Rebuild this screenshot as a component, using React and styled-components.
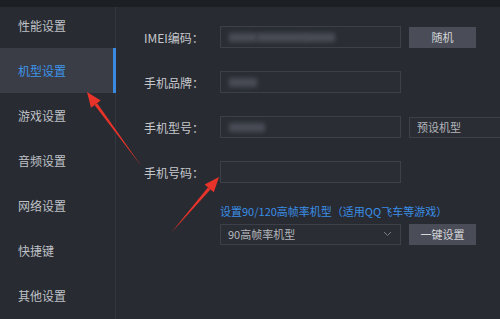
import React from "react";
import styled, { createGlobalStyle } from "styled-components";

const Global = createGlobalStyle`
  html, body { margin: 0; padding: 0; background: #282b32; }
  body { font-family: "Noto Sans CJK SC", "Noto Sans", sans-serif; }
  * { box-sizing: border-box; }
`;

const Page = styled.div`
  position: relative;
  width: 500px;
  height: 319px;
  overflow: hidden;
  background: #282b32;
  display: flex;
  flex-direction: column;
`;

const TopBar = styled.div`
  height: 7px;
  background: #1c1f24;
  flex-shrink: 0;
  position: relative;
  z-index: 2;
`;

const Body = styled.div`
  flex: 1;
  display: flex;
`;

const Sidebar = styled.nav`
  width: 116px;
  flex-shrink: 0;
  border-right: 1px solid #34373f;
  display: flex;
  flex-direction: column;
  margin-top: -4px;
`;

const NavItem = styled.div`
  height: 45px;
  flex-shrink: 0;
  display: flex;
  align-items: center;
  padding-left: 18px;
  font-size: 12px;
  color: ${(p) => (p.$active ? "#3d94ea" : "#bfc1c6")};
  background: ${(p) => (p.$active ? "#3a3d46" : "transparent")};
  border-right: 3px solid ${(p) => (p.$active ? "#3a8ae0" : "transparent")};
  margin-right: -1px;
  position: relative;
  z-index: 1;
`;

const Content = styled.div`
  flex: 1;
  padding: 19px 0 0 28px;
  display: flex;
  flex-direction: column;
`;

const Row = styled.div`
  display: flex;
  align-items: center;
  height: 22px;
  margin-bottom: ${(p) => p.$mb ?? 23}px;
`;

const Label = styled.div`
  width: 76px;
  font-size: 12px;
  color: #c6c8cc;
  white-space: nowrap;
`;

const Input = styled.div`
  width: 181px;
  height: 22px;
  border: 1px solid #3d4049;
  background: #2a2d34;
  position: relative;
  overflow: hidden;
`;

const Blur = styled.div`
  position: absolute;
  left: ${(p) => p.$x}px;
  top: 6px;
  width: ${(p) => p.$w}px;
  height: 9px;
  background: #4c4f58;
  filter: blur(2px);
  opacity: 0.9;
`;

const Button = styled.div`
  margin-left: 8px;
  width: 67px;
  height: 21px;
  background: #4a4d57;
  color: #d4d6da;
  font-size: 11px;
  display: flex;
  align-items: center;
  justify-content: center;
`;

const Select = styled.div`
  margin-left: ${(p) => (p.$ml ? 8 : 0)}px;
  width: ${(p) => p.$w}px;
  height: 21px;
  border: 1px solid #3d4049;
  background: #2a2d34;
  color: #b4b6bb;
  font-size: 11px;
  display: flex;
  align-items: center;
  padding: 0 8px 0 7px;
  justify-content: space-between;
  flex-shrink: 0;
`;

const LinkText = styled.div`
  margin-left: 76px;
  font-size: 11px;
  color: #3a8ee6;
  margin-bottom: 4px;
  white-space: nowrap;
`;

const Arrows = styled.svg`
  position: absolute;
  left: 0;
  top: 0;
  pointer-events: none;
  z-index: 3;
`;

const items = ["性能设置", "机型设置", "游戏设置", "音频设置", "网络设置", "快捷键", "其他设置"];

function Arrow({ x1, y1, x2, y2 }) {
  const ang = Math.atan2(y2 - y1, x2 - x1);
  const L = 15, W = 6;
  const bx = x2 - L * Math.cos(ang), by = y2 - L * Math.sin(ang);
  const px = -Math.sin(ang) * W, py = Math.cos(ang) * W;
  const qx = -Math.sin(ang) * 1.6, qy = Math.cos(ang) * 1.6;
  return (
    <g fill="#e8332a">
      <polygon points={`${x1},${y1} ${bx + qx},${by + qy} ${bx - qx},${by - qy}`} />
      <polygon points={`${x2},${y2} ${bx + px},${by + py} ${bx - px},${by - py}`} />
    </g>
  );
}

export default function App() {
  return (
    <Page>
      <Global />
      <TopBar />
      <Body>
        <Sidebar>
          {items.map((t, i) => (
            <NavItem key={t} $active={i === 1}>{t}</NavItem>
          ))}
        </Sidebar>
        <Content>
          <Row>
            <Label>IMEI编码：</Label>
            <Input>
              <Blur $x={8} $w={28} />
              <Blur $x={36} $w={50} />
              <Blur $x={84} $w={30} />
            </Input>
            <Button>随机</Button>
          </Row>
          <Row>
            <Label>手机品牌：</Label>
            <Input>
              <Blur $x={8} $w={28} />
            </Input>
          </Row>
          <Row>
            <Label>手机型号：</Label>
            <Input>
              <Blur $x={8} $w={36} />
            </Input>
            <Select $ml $w={100}>预设机型<span /></Select>
          </Row>
          <Row $mb={20}>
            <Label>手机号码：</Label>
            <Input />
          </Row>
          <LinkText>设置90/120高帧率机型（适用QQ飞车等游戏）</LinkText>
          <Row>
            <Label />
            <Select $w={181}>
              <span>90高帧率机型</span>
              <svg width="9" height="6" viewBox="0 0 9 6">
                <path d="M1 1l3.5 3.5L8 1" stroke="#7a7d85" strokeWidth="1" fill="none" />
              </svg>
            </Select>
            <Button>一键设置</Button>
          </Row>
        </Content>
      </Body>
      <Arrows width="500" height="319">
        <Arrow x1={142} y1={167} x2={87} y2={92} />
        <Arrow x1={171} y1={233} x2={219} y2={177} />
      </Arrows>
    </Page>
  );
}
